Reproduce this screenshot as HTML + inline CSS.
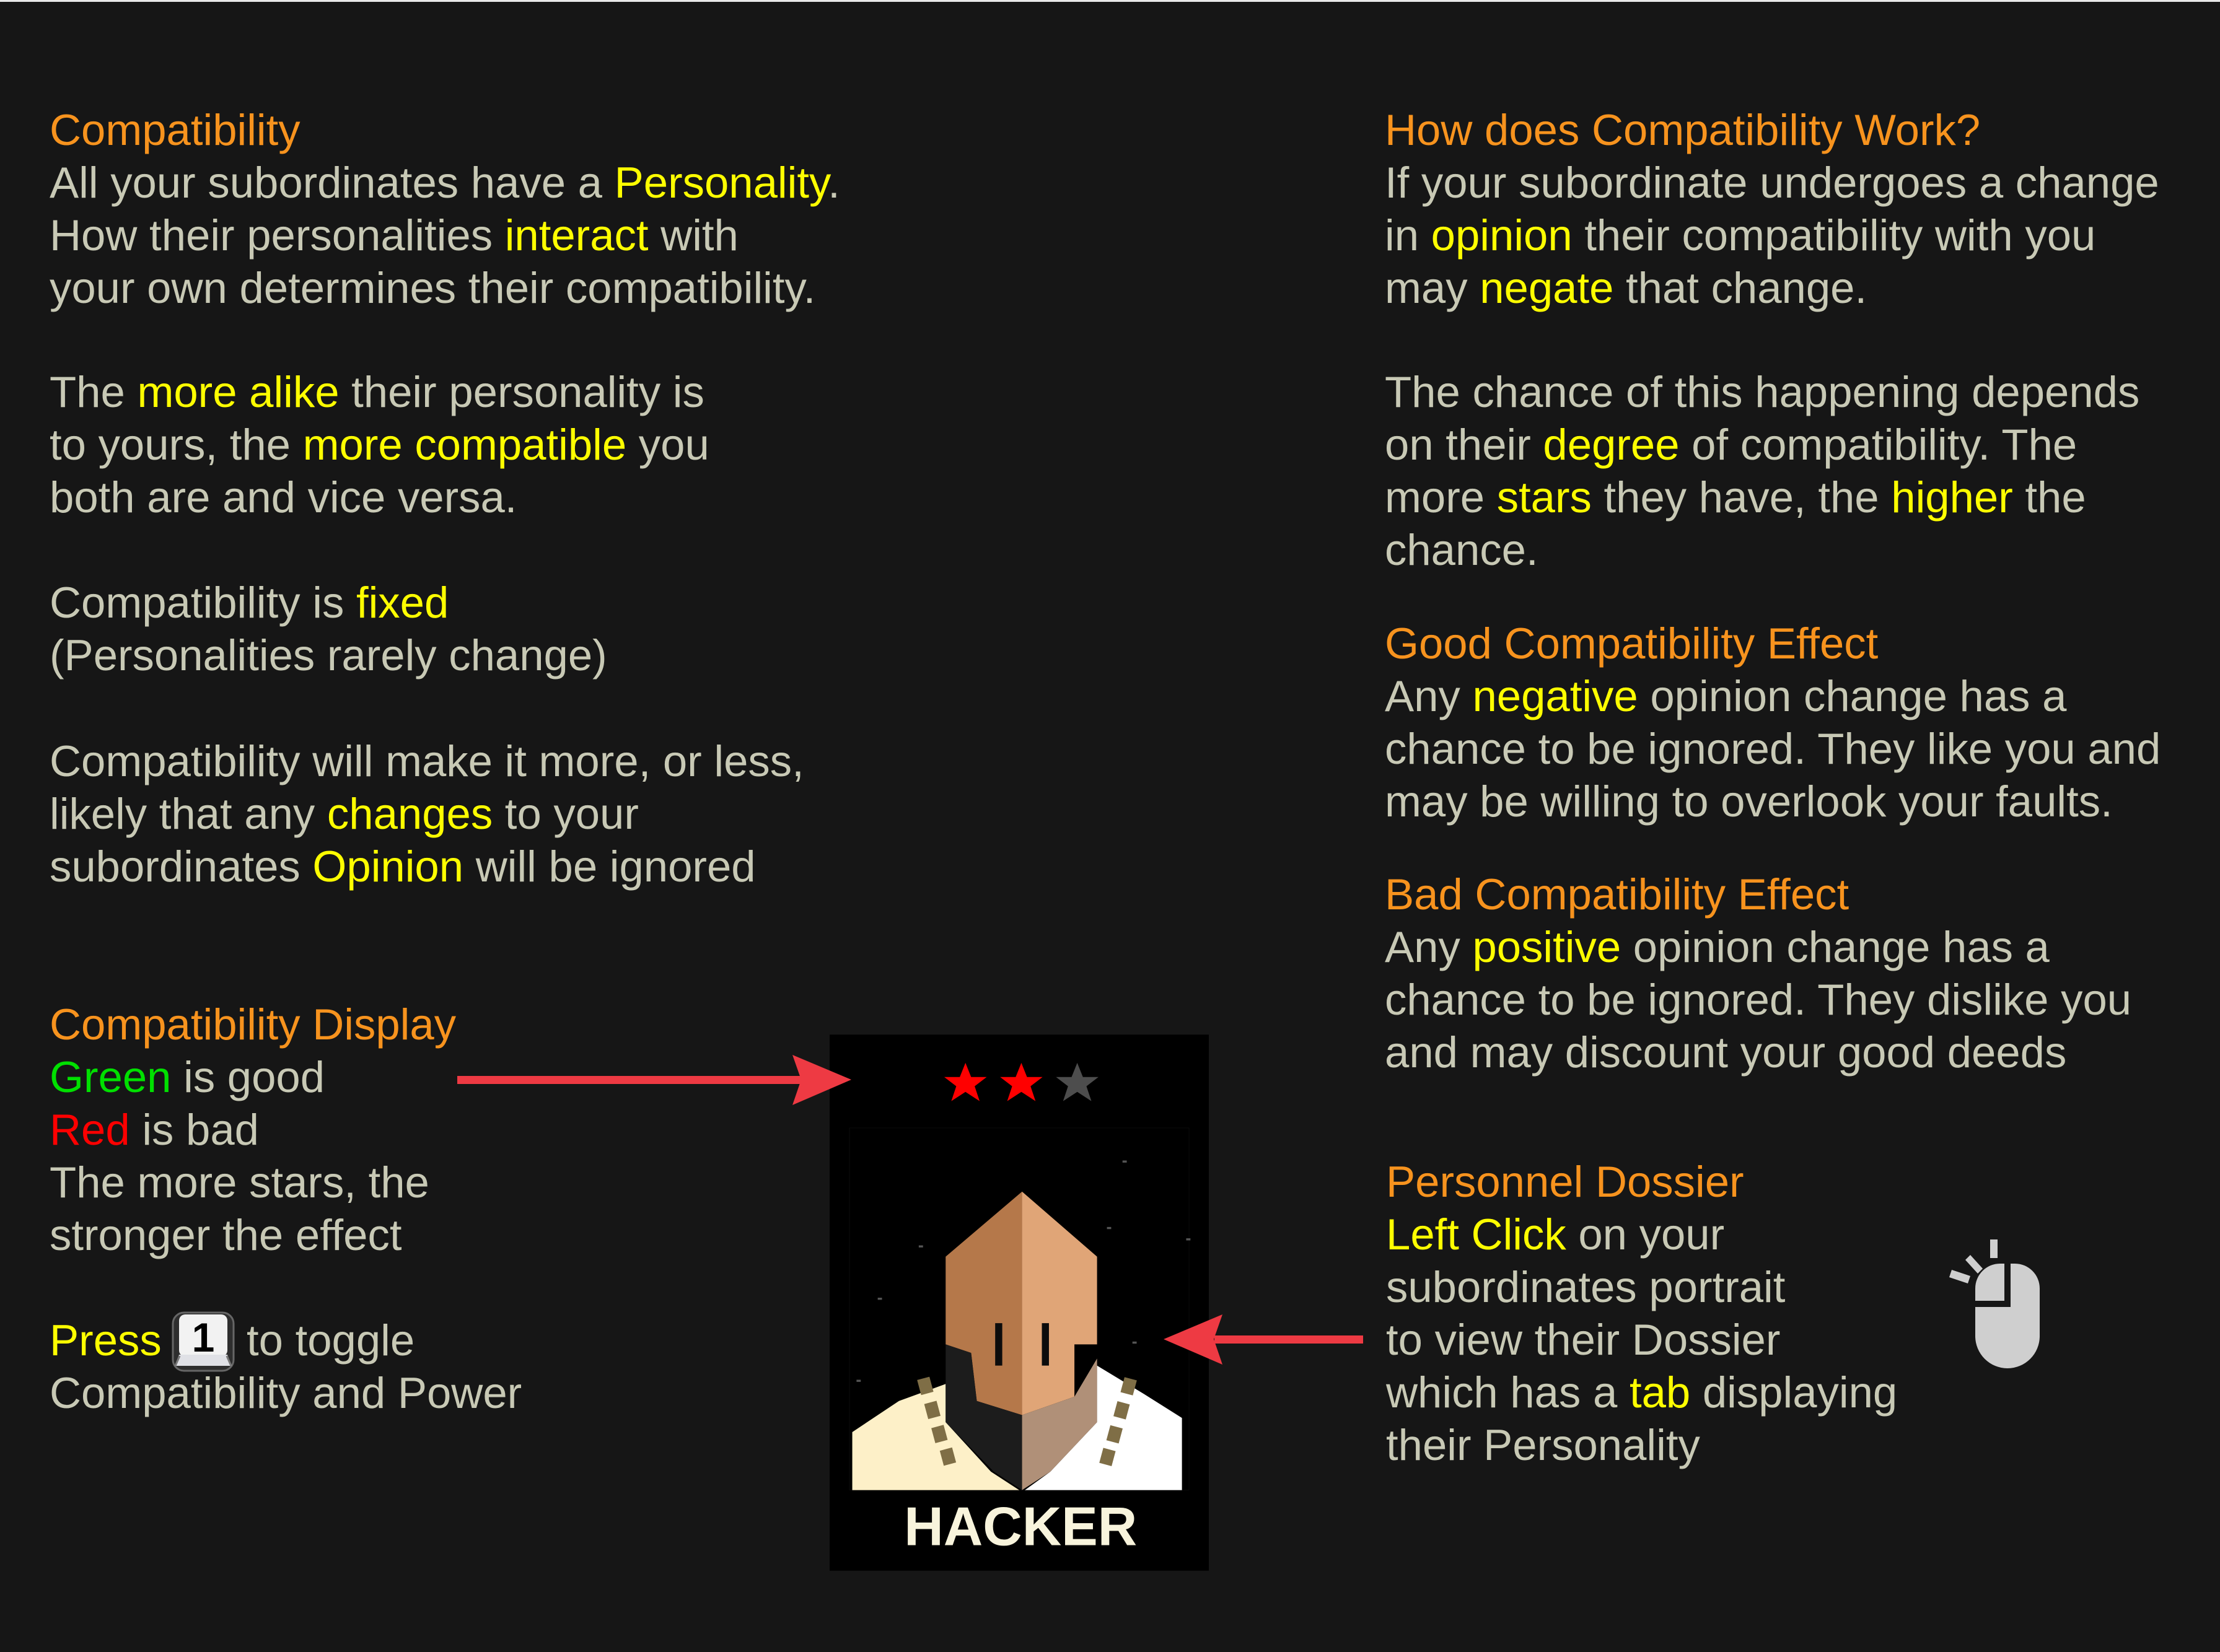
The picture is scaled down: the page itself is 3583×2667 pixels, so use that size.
<!DOCTYPE html>
<html><head><meta charset="utf-8"><style>
html,body{margin:0;padding:0;}
body{width:3583px;height:2667px;background:#161616;position:relative;overflow:hidden;font-family:"Liberation Sans",Arial,sans-serif;}
.p{position:absolute;font-size:70.7px;line-height:85px;color:#c8c9b5;white-space:nowrap;}
.o{color:#f7931e}.y{color:#ffff00}.g{color:#00e000}.r{color:#ff0000}
</style></head><body>
<div style="position:absolute;left:0;top:0;width:3583px;height:3px;background:#e8e8e8"></div>

<div class="p" style="left:80px;top:167px"><span class="o">Compatibility</span><br>All your subordinates have a <span class="y">Personality</span>.<br>How their personalities <span class="y">interact</span> with<br>your own determines their compatibility.</div>
<div class="p" style="left:80px;top:590px">The <span class="y">more alike</span> their personality is<br>to yours, the <span class="y">more compatible</span> you<br>both are and vice versa.</div>
<div class="p" style="left:80px;top:930px">Compatibility is <span class="y">fixed</span><br>(Personalities rarely change)</div>
<div class="p" style="left:80px;top:1186px">Compatibility will make it more, or less,<br>likely that any <span class="y">changes</span> to your<br>subordinates <span class="y">Opinion</span> will be ignored</div>
<div class="p" style="left:80px;top:1611px"><span class="o">Compatibility Display</span><br><span class="g">Green</span> is good<br><span class="r">Red</span> is bad<br>The more stars, the<br>stronger the effect</div>
<div class="p" style="left:80px;top:2121px"><span class="y">Press</span></div>
<div class="p" style="left:398px;top:2121px">to toggle</div>
<div class="p" style="left:80px;top:2206px">Compatibility and Power</div>
<svg style="position:absolute;left:277px;top:2117px" width="102" height="98" viewBox="0 0 102 98">
<rect x="2" y="2" width="98" height="94" rx="18" fill="#2e2e2e" stroke="#666" stroke-width="3"/>
<rect x="12" y="5" width="78" height="68" rx="10" fill="#f2f2f2"/>
<path d="M12 70 L5 88 L97 88 L90 70 Z" fill="#e0e1e6"/>
<path d="M13 72 L6 88 M89 72 L96 88" stroke="#777" stroke-width="3"/>
<text x="51" y="65" font-family="Liberation Sans" font-weight="bold" font-size="66" text-anchor="middle" fill="#000">1</text>
</svg>

<div class="p" style="left:2235px;top:167px"><span class="o">How does Compatibility Work?</span><br>If your subordinate undergoes a change<br>in <span class="y">opinion</span> their compatibility with you<br>may <span class="y">negate</span> that change.</div>
<div class="p" style="left:2235px;top:590px">The chance of this happening depends<br>on their <span class="y">degree</span> of compatibility. The<br>more <span class="y">stars</span> they have, the <span class="y">higher</span> the<br>chance.</div>
<div class="p" style="left:2235px;top:996px"><span class="o">Good Compatibility Effect</span><br>Any <span class="y">negative</span> opinion change has a<br>chance to be ignored. They like you and<br>may be willing to overlook your faults.</div>
<div class="p" style="left:2235px;top:1401px"><span class="o">Bad Compatibility Effect</span><br>Any <span class="y">positive</span> opinion change has a<br>chance to be ignored. They dislike you<br>and may discount your good deeds</div>
<div class="p" style="left:2237px;top:1865px"><span class="o">Personnel Dossier</span><br><span class="y">Left Click</span> on your<br>subordinates portrait<br>to view their Dossier<br>which has a <span class="y">tab</span> displaying<br>their Personality</div>

<!-- mouse -->
<svg style="position:absolute;left:3140px;top:1995px" width="160" height="220" viewBox="3140 1995 160 220" fill="#cfcfcf">
<rect x="3212" y="2001" width="12" height="30"/>
<polygon points="3172,2034 3180,2026 3200,2048 3192,2056"/>
<polygon points="3146,2062 3150,2050 3180,2060 3176,2072"/>
<path d="M3188 2100 L3235 2100 L3235 2040 L3228 2040 A40 40 0 0 0 3188 2080 Z"/>
<path d="M3245 2040 L3252 2040 A40 40 0 0 1 3292 2080 L3292 2157 A52 52 0 0 1 3188 2157 L3188 2110 L3245 2110 Z"/>
</svg>

<!-- portrait -->
<svg style="position:absolute;left:1339px;top:1670px" width="612" height="866" viewBox="586 731 268 379">
<rect x="586" y="731" width="268" height="379" fill="#000"/>
<rect x="600" y="797" width="240" height="256" fill="#000" stroke="#0a0a0a" stroke-width="0.5"/>
<polygon points="682,751 686,761 697,761 688.5,767.5 692,778 682,771.5 672,778 675.5,767.5 667,761 678,761" fill="#ff0000"/>
<polygon points="721.5,751 725.5,761 736.5,761 728,767.5 731.5,778 721.5,771.5 711.5,778 715,767.5 706.5,761 717.5,761" fill="#ff0000"/>
<polygon points="761,751 765,761 776,761 767.5,767.5 771,778 761,771.5 751,778 754.5,767.5 746,761 757,761" fill="#4d4d4d"/>
<g fill="#555"><rect x="649" y="880" width="3" height="1.5"/><rect x="620" y="917" width="3" height="1.5"/><rect x="782" y="867" width="3" height="1.5"/><rect x="838" y="875" width="3" height="1.5"/><rect x="793" y="820" width="3" height="1.5"/><rect x="605" y="975" width="3" height="1.5"/><rect x="800" y="948" width="3" height="1.5"/></g>
<polygon points="602,1053 602,1012 635,990 668,978 668,1005 700,1040 720,1053" fill="#fdf0c8"/>
<polygon points="835,1053 835,1002 808,985 775,965 775,1005 742,1040 724,1053" fill="#fff"/>
<polygon points="668,888 722,842 722,1000 690,990 686,956 668,950" fill="#b5784a"/>
<polygon points="722,842 775,888 775,950 759,950 759,987 722,1000" fill="#e0a577"/>
<polygon points="668,950 686,956 690,990 722,1000 722,1053 702,1040 668,1005" fill="#1c1c1c"/>
<polygon points="722,1000 759,987 775,960 775,1005 742,1040 722,1053" fill="#b09078"/>
<rect x="703" y="935" width="5" height="30" fill="#0c0c0c"/>
<rect x="736" y="935" width="5" height="30" fill="#0c0c0c"/>
<g fill="#7f6e46">
<rect x="649" y="974" width="9" height="11" transform="rotate(-15 653 979)"/>
<rect x="654" y="991" width="9" height="11" transform="rotate(-15 658 996)"/>
<rect x="659" y="1008" width="9" height="11" transform="rotate(-15 663 1013)"/>
<rect x="665" y="1024" width="9" height="11" transform="rotate(-15 669 1029)"/>
<rect x="793" y="974" width="9" height="11" transform="rotate(15 797 979)"/>
<rect x="788" y="991" width="9" height="11" transform="rotate(15 792 996)"/>
<rect x="783" y="1008" width="9" height="11" transform="rotate(15 787 1013)"/>
<rect x="778" y="1024" width="9" height="11" transform="rotate(15 782 1029)"/>
</g>
<text x="721" y="1092" font-family="Liberation Sans" font-weight="bold" font-size="38.5" text-anchor="middle" fill="#f8f4dc">HACKER</text>
</svg>

<!-- arrows -->
<svg style="position:absolute;left:0;top:0" width="3583" height="2667">
<rect x="738" y="1737" width="560" height="13" fill="#ee3a43"/>
<polygon points="1374,1743 1279,1703 1293,1743 1279,1784" fill="#ee3a43"/>
<rect x="1960" y="2156" width="240" height="13" fill="#ee3a43"/>
<polygon points="1878,2162 1973,2122 1959,2162 1973,2203" fill="#ee3a43"/>
</svg>
</body></html>
